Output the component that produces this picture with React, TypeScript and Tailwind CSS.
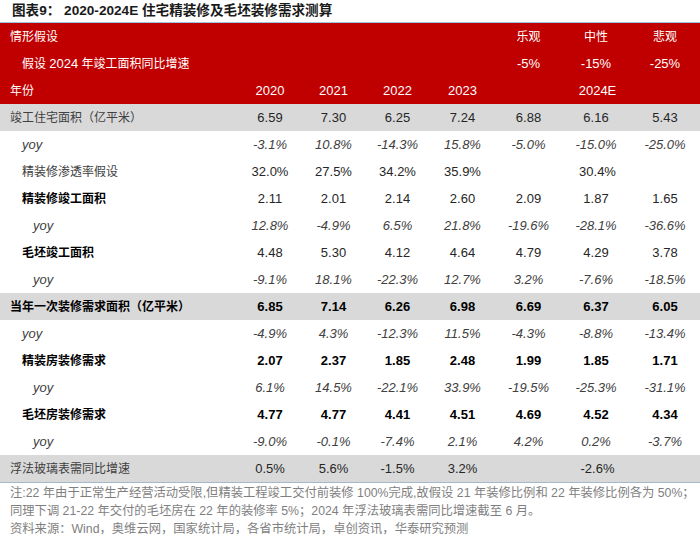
const COLS = "grid grid-cols-[238px_64px_63px_65px_65px_67px_68px_70px]";

type Row = {
  label: string;
  indent: 0 | 1 | 2;
  boldLabel?: boolean;
  boldVals?: boolean;
  italic?: boolean;
  gray?: boolean;
  vals: string[];
  mid?: string;
};

const ROWS: Row[] = [
  { label: "竣工住宅面积（亿平米）", indent: 0, gray: true, vals: ["6.59", "7.30", "6.25", "7.24", "6.88", "6.16", "5.43"] },
  { label: "yoy", indent: 1, italic: true, vals: ["-3.1%", "10.8%", "-14.3%", "15.8%", "-5.0%", "-15.0%", "-25.0%"] },
  { label: "精装修渗透率假设", indent: 1, vals: ["32.0%", "27.5%", "34.2%", "35.9%"], mid: "30.4%" },
  { label: "精装修竣工面积", indent: 1, boldLabel: true, vals: ["2.11", "2.01", "2.14", "2.60", "2.09", "1.87", "1.65"] },
  { label: "yoy", indent: 2, italic: true, vals: ["12.8%", "-4.9%", "6.5%", "21.8%", "-19.6%", "-28.1%", "-36.6%"] },
  { label: "毛坯竣工面积", indent: 1, boldLabel: true, vals: ["4.48", "5.30", "4.12", "4.64", "4.79", "4.29", "3.78"] },
  { label: "yoy", indent: 2, italic: true, vals: ["-9.1%", "18.1%", "-22.3%", "12.7%", "3.2%", "-7.6%", "-18.5%"] },
  { label: "当年一次装修需求面积（亿平米）", indent: 0, gray: true, boldLabel: true, boldVals: true, vals: ["6.85", "7.14", "6.26", "6.98", "6.69", "6.37", "6.05"] },
  { label: "yoy", indent: 1, italic: true, vals: ["-4.9%", "4.3%", "-12.3%", "11.5%", "-4.3%", "-8.8%", "-13.4%"] },
  { label: "精装房装修需求", indent: 1, boldLabel: true, boldVals: true, vals: ["2.07", "2.37", "1.85", "2.48", "1.99", "1.85", "1.71"] },
  { label: "yoy", indent: 2, italic: true, vals: ["6.1%", "14.5%", "-22.1%", "33.9%", "-19.5%", "-25.3%", "-31.1%"] },
  { label: "毛坯房装修需求", indent: 1, boldLabel: true, boldVals: true, vals: ["4.77", "4.77", "4.41", "4.51", "4.69", "4.52", "4.34"] },
  { label: "yoy", indent: 2, italic: true, vals: ["-9.0%", "-0.1%", "-7.4%", "2.1%", "4.2%", "0.2%", "-3.7%"] },
  { label: "浮法玻璃表需同比增速", indent: 0, gray: true, vals: ["0.5%", "5.6%", "-1.5%", "3.2%"], mid: "-2.6%" },
];

const INDENT = ["pl-[10px]", "pl-[22px]", "pl-[33px]"];

function DataRow({ row }: { row: Row }) {
  const valCls = row.italic
    ? "italic text-[#404040]"
    : row.boldVals
      ? "font-bold text-black"
      : "text-[#262626]";
  return (
    <div className={`${COLS} h-[27px] items-center ${row.gray ? "bg-[#d9d9d9]" : "bg-white"}`}>
      <div
        className={`${INDENT[row.indent]} ${row.italic ? "italic text-[13px] text-[#262626]" : "text-[12px]"} ${
          row.boldLabel ? "font-bold text-black" : "text-[#404040]"
        } whitespace-nowrap`}
      >
        {row.label}
      </div>
      {row.vals.map((v, i) => (
        <div key={i} className={`text-center text-[13px] ${valCls}`}>
          {v}
        </div>
      ))}
      {row.mid && <div className={`col-span-3 text-center text-[13px] ${valCls}`}>{row.mid}</div>}
    </div>
  );
}

export default function App() {
  return (
    <div className="w-[700px] h-[536px] bg-white overflow-hidden font-['Liberation_Sans','Noto_Sans_CJK_SC',sans-serif]">
      <div className="h-[22px] pl-[12px] flex items-center text-[13.6px] font-bold text-[#1a1a1a] whitespace-nowrap">
        图表9： 2020-2024E 住宅精装修及毛坯装修需求测算
      </div>
      <div className="border-t border-[#9dc3e6] bg-[#c00000] text-white">
        <div className={`${COLS} h-[27px] items-center`}>
          <div className="pl-[10px] text-[12px]">情形假设</div>
          <div />
          <div />
          <div />
          <div />
          <div className="text-center text-[12px]">乐观</div>
          <div className="text-center text-[12px]">中性</div>
          <div className="text-center text-[12px]">悲观</div>
        </div>
        <div className={`${COLS} h-[27px] items-center`}>
          <div className="pl-[22px] text-[12px] whitespace-nowrap">
            假设 <span className="text-[13px]">2024</span> 年竣工面积同比增速
          </div>
          <div />
          <div />
          <div />
          <div />
          <div className="text-center text-[13px]">-5%</div>
          <div className="text-center text-[13px]">-15%</div>
          <div className="text-center text-[13px]">-25%</div>
        </div>
        <div className={`${COLS} h-[27px] items-center`}>
          <div className="pl-[10px] text-[12px]">年份</div>
          <div className="text-center text-[13px]">2020</div>
          <div className="text-center text-[13px]">2021</div>
          <div className="text-center text-[13px]">2022</div>
          <div className="text-center text-[13px]">2023</div>
          <div className="col-span-3 text-center text-[13px]">2024E</div>
        </div>
      </div>
      {ROWS.map((r, i) => (
        <DataRow key={i} row={r} />
      ))}
      <div className="border-t border-[#a6b8cc] pl-[10px] pt-[1px] text-[12.3px] leading-[18px] text-[#7f7f7f] whitespace-nowrap">
        <div>
          注:22 年由于正常生产经营活动受限,但精装工程竣工交付前装修 100%完成,故假设 21 年装修比例和 22 年装修比例各为 50%；
        </div>
        <div>同理下调 21-22 年交付的毛坯房在 22 年的装修率 5%；2024 年浮法玻璃表需同比增速截至 6 月。</div>
        <div>资料来源：Wind，奥维云网，国家统计局，各省市统计局，卓创资讯，华泰研究预测</div>
      </div>
    </div>
  );
}
